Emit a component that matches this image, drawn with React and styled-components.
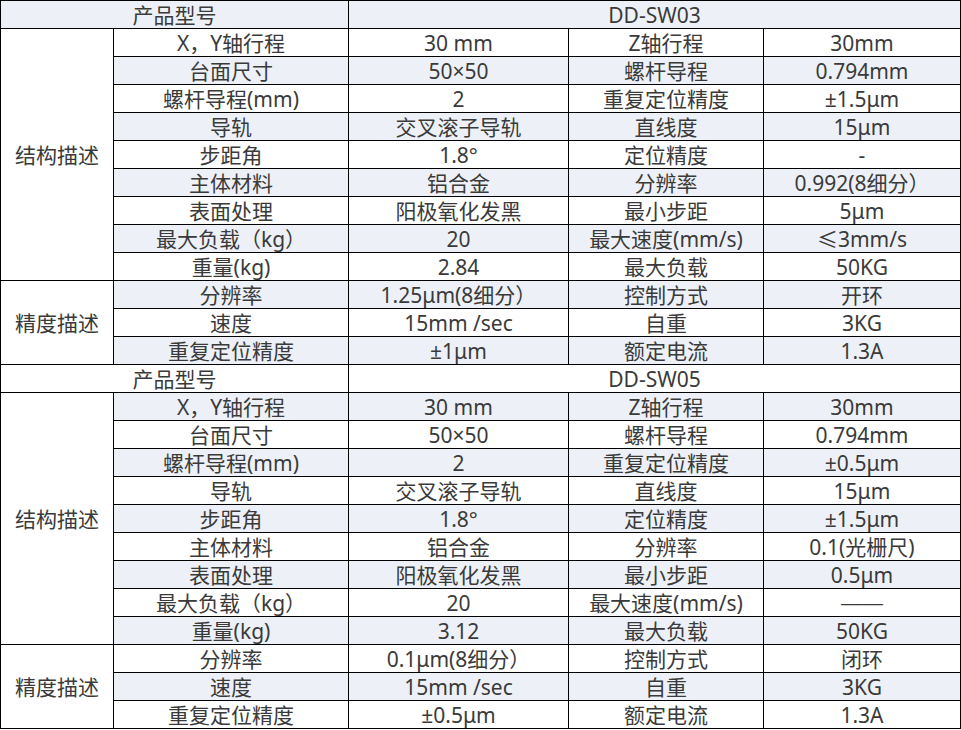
import React from 'react';
import styled, { createGlobalStyle } from 'styled-components';

const GlobalStyle = createGlobalStyle`
  html, body {
    margin: 0;
    padding: 0;
    background: #ffffff;
  }
  body {
    font-family: "Noto Sans", "Noto Sans CJK SC", sans-serif;
    color: #333333;
  }
`;

const SpecTable = styled.table`
  width: 960px;
  border-collapse: collapse;
  table-layout: fixed;
  font-family: "Noto Sans", "Noto Sans CJK SC", sans-serif;
  font-size: 21px;
  color: #3a3a3a;
`;

const Col = styled.col`
  width: ${(p) => p.$w}px;
`;

const Row = styled.tr`
  height: 28px;
  background: ${(p) => (p.$shaded ? '#edf1f7' : '#ffffff')};
`;

const Cell = styled.td`
  border: 1px solid #000000;
  padding: 0;
  text-align: center;
  vertical-align: middle;
  line-height: 26px;
  white-space: nowrap;
  overflow: hidden;
`;

const GroupCell = styled(Cell)`
  background: #ffffff;
`;

// 빈 값 표시용 긴 대시
const Dash = styled.span`
  font-family: "Liberation Sans", sans-serif;
`;

const colWidths = [113, 235, 220, 195, 197];

const products = [
  {
    model: 'DD-SW03',
    structure: [
      ['X，Y轴行程', '30 mm', 'Z轴行程', '30mm'],
      ['台面尺寸', '50×50', '螺杆导程', '0.794mm'],
      ['螺杆导程(mm)', '2', '重复定位精度', '±1.5μm'],
      ['导轨', '交叉滚子导轨', '直线度', '15μm'],
      ['步距角', '1.8°', '定位精度', '-'],
      ['主体材料', '铝合金', '分辨率', '0.992(8细分）'],
      ['表面处理', '阳极氧化发黑', '最小步距', '5μm'],
      ['最大负载（kg）', '20', '最大速度(mm/s)', '≤3mm/s'],
      ['重量(kg)', '2.84', '最大负载', '50KG'],
    ],
    precision: [
      ['分辨率', '1.25μm(8细分）', '控制方式', '开环'],
      ['速度', '15mm /sec', '自重', '3KG'],
      ['重复定位精度', '±1μm', '额定电流', '1.3A'],
    ],
  },
  {
    model: 'DD-SW05',
    structure: [
      ['X，Y轴行程', '30 mm', 'Z轴行程', '30mm'],
      ['台面尺寸', '50×50', '螺杆导程', '0.794mm'],
      ['螺杆导程(mm)', '2', '重复定位精度', '±0.5μm'],
      ['导轨', '交叉滚子导轨', '直线度', '15μm'],
      ['步距角', '1.8°', '定位精度', '±1.5μm'],
      ['主体材料', '铝合金', '分辨率', '0.1(光栅尺)'],
      ['表面处理', '阳极氧化发黑', '最小步距', '0.5μm'],
      ['最大负载（kg）', '20', '最大速度(mm/s)', '——'],
      ['重量(kg)', '3.12', '最大负载', '50KG'],
    ],
    precision: [
      ['分辨率', '0.1μm(8细分）', '控制方式', '闭环'],
      ['速度', '15mm /sec', '自重', '3KG'],
      ['重复定位精度', '±0.5μm', '额定电流', '1.3A'],
    ],
  },
];

const renderValue = (v) => (v === '——' ? <Dash>{v}</Dash> : v);

const buildRows = () => {
  const rows = [];
  let idx = 0;
  products.forEach((p) => {
    rows.push(
      <Row key={'h' + idx} $shaded={idx % 2 === 0}>
        <Cell colSpan={2}>产品型号</Cell>
        <Cell colSpan={3}>{p.model}</Cell>
      </Row>
    );
    idx++;
    [['结构描述', p.structure], ['精度描述', p.precision]].forEach(([group, list]) => {
      list.forEach((r, i) => {
        rows.push(
          <Row key={'r' + idx} $shaded={idx % 2 === 0}>
            {i === 0 && <GroupCell rowSpan={list.length}>{group}</GroupCell>}
            {r.map((v, j) => (
              <Cell key={j}>{renderValue(v)}</Cell>
            ))}
          </Row>
        );
        idx++;
      });
    });
  });
  return rows;
};

const App = () => {
  return (
    <>
      <GlobalStyle />
      <SpecTable>
        <colgroup>
          {colWidths.map((w, i) => (
            <Col key={i} $w={w} />
          ))}
        </colgroup>
        <tbody>{buildRows()}</tbody>
      </SpecTable>
    </>
  );
};

export default App;
